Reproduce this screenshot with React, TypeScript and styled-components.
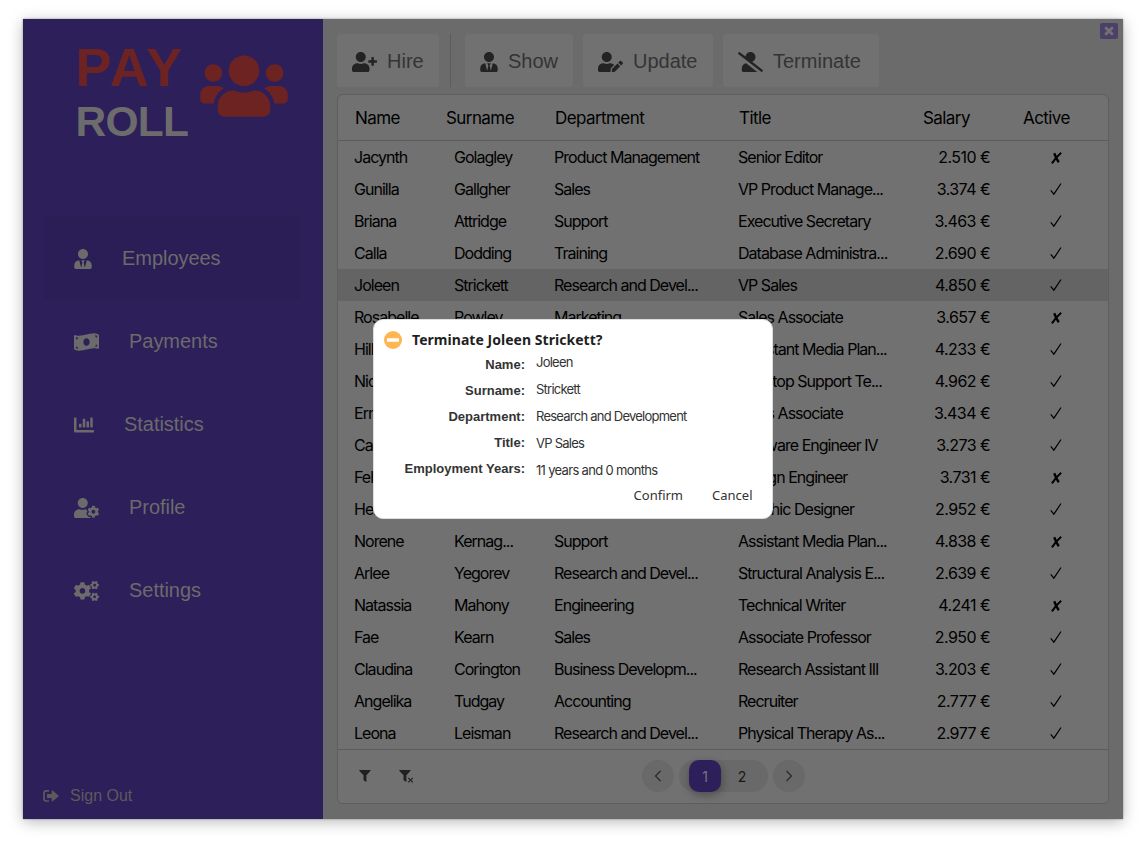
import React from "react";
import styled, { createGlobalStyle } from "styled-components";
import {
  FaUsers, FaUserTie, FaMoneyBillWave, FaChartBar, FaUserCog, FaCogs,
  FaUserPlus, FaUserEdit, FaUserSlash, FaTimes,
} from "react-icons/fa";

const sans = `"Liberation Sans", Arial, sans-serif`;
const inter = `Inter, "Liberation Sans", sans-serif`;

const Global = createGlobalStyle`
  *, *::before, *::after { box-sizing: border-box; }
  html, body { margin: 0; background: #fff; }
  svg { display: block; flex: none; }
`;

const Page = styled.div`
  width: 1146px;
  height: 846px;
  padding: 19px 23px;
  overflow: hidden;
`;

const Window = styled.div`
  position: relative;
  display: flex;
  width: 1100px;
  height: 800px;
  background: #6b6b6b;
  box-shadow: 0 0 2px rgba(0, 0, 0, 0.35), 0 3px 14px rgba(0, 0, 0, 0.27);
`;

const Sidebar = styled.aside`
  display: flex;
  flex-direction: column;
  width: 300px;
  padding: 21px 20px 10px;
  background: #2d1f5a;
  font-family: ${sans};
`;

const Brand = styled.div`
  display: flex;
  gap: 11px;
  height: 176px;
  padding-left: 33px;
`;

const BrandText = styled.div`
  width: 113px;
  font-weight: 700;
  white-space: nowrap;
`;

const BrandTop = styled.div`
  height: 54px;
  font-size: 54px;
  line-height: 54px;
  letter-spacing: 2.3px;
  margin-left: -0.5px;
  color: #6e2323;
`;

const BrandBottom = styled.div`
  padding-top: 4px;
  font-size: 42.5px;
  line-height: 48px;
  letter-spacing: -0.7px;
  margin-left: -0.5px;
  color: #6c6c6c;
`;

const BrandIcon = styled.div`
  padding-top: 10.5px;
  color: #6e2323;
  svg { width: 88px; height: 70px; }
`;

const NavItem = styled.a<{ $active?: boolean }>`
  display: flex;
  align-items: center;
  gap: 30px;
  width: 256px;
  height: 83px;
  margin-left: 1px;
  padding: 2px 0 0 30px;
  border-radius: 3px;
  font-size: 20px;
  letter-spacing: -0.04px;
  color: #6b6b6b;
  background: ${(p) => (p.$active ? "#2b1e56" : "transparent")};
`;

const SignOut = styled.a`
  display: flex;
  align-items: center;
  gap: 11px;
  height: 26px;
  margin-top: auto;
  font-size: 16px;
  color: #5b5b5d;
`;

const Main = styled.main`
  display: flex;
  flex-direction: column;
  gap: 7px;
  width: 800px;
  padding: 15px 14px;
`;

const Toolbar = styled.div`
  display: flex;
  gap: 10px;
  height: 53px;
`;

const ToolButton = styled.button<{ $width: number }>`
  display: flex;
  align-items: center;
  gap: 10px;
  width: ${(p) => p.$width}px;
  padding: 2px 0 0 15px;
  border: 0;
  border-radius: 3px;
  background: #717171;
  color: #343434;
  font: 20px ${sans};
  svg { color: #232323; }
`;

const Separator = styled.div`
  width: 1px;
  margin: 0 4px 0 1px;
  background: #5c5c5c;
`;

const Card = styled.section`
  width: 772px;
  height: 710px;
  border: 1px solid #5e5e5e;
  border-radius: 6px;
  background: #717171;
  color: #000;
  font-family: ${inter};
`;

const Header = styled.div`
  display: flex;
  align-items: center;
  height: 46px;
  padding-left: 17px;
  border-bottom: 1px solid #5c5c5c;
  font-size: 17px;
  letter-spacing: -0.58px;
`;

const HeadCell = styled.div<{ $width: number }>`
  width: ${(p) => p.$width}px;
`;

const Row = styled.div<{ $selected?: boolean }>`
  display: grid;
  grid-template-columns: 100px 100px 184px 152px 100px 1fr;
  align-items: center;
  height: 32px;
  padding-left: 16px;
  background: ${(p) => (p.$selected ? "#646464" : "transparent")};
  font-size: 16px;
  letter-spacing: -0.97px;
  white-space: nowrap;
`;

const Salary = styled.div`
  text-align: right;
  letter-spacing: -0.56px;
`;

const Active = styled.div`
  display: flex;
  padding-left: 60px;
`;

const Footer = styled.div`
  display: flex;
  align-items: center;
  height: 53px;
  padding-left: 21px;
  border-top: 1px solid #5c5c5c;
`;

const Filters = styled.div`
  display: flex;
  gap: 28px;
  width: 283px;
  color: #212121;
`;

const Pager = styled.div`
  display: flex;
  gap: 5px;
  font-size: 14px;
`;

const Round = styled.button`
  display: grid;
  place-items: center;
  width: 32px;
  height: 32px;
  padding: 0;
  border: 0;
  border-radius: 50%;
  background: #696969;
`;

const Pages = styled.div`
  display: flex;
  width: 89px;
  height: 32px;
  padding-left: 10px;
  border-radius: 16px;
  background: #696969;
`;

const PageNumber = styled.div<{ $current?: boolean }>`
  display: grid;
  place-items: center;
  width: ${(p) => (p.$current ? 32 : 42)}px;
  height: 32px;
  border-radius: 10px;
  background: ${(p) => (p.$current ? "#2d1f5a" : "transparent")};
  color: ${(p) => (p.$current ? "#777480" : "#171717")};
  box-shadow: ${(p) => (p.$current ? "1px 3px 8px rgba(0,0,0,.3)" : "none")};
`;

const Close = styled.button`
  position: absolute;
  top: 4px;
  right: 5px;
  display: grid;
  place-items: center;
  width: 18px;
  height: 16px;
  padding: 0;
  border: 0;
  border-radius: 2px;
  background: #4c4068;
  color: #737373;
  svg { stroke: currentColor; stroke-width: 30px; }
`;

const Dialog = styled.div`
  position: absolute;
  left: 350px;
  top: 300px;
  width: 400px;
  height: 200px;
  padding: 11px 11px 0;
  border: 1px solid #ddd;
  border-radius: 10px;
  background: #fff;
  color: #333;
`;

const DialogTitle = styled.div`
  display: flex;
  align-items: center;
  gap: 10px;
  height: 18px;
  margin: 0 0 1px -1px;
  color: #1f1f1f;
  font: 700 14px/18px "Noto Sans", sans-serif;
  letter-spacing: 0.04px;
  span { margin-top: -1px; }
`;

const Details = styled.div`
  display: flex;
  gap: 11px;
  height: 136px;
`;

const Labels = styled.div`
  display: flex;
  flex-direction: column;
  width: 140px;
  padding-top: 2px;
  text-align: right;
  font: 700 13px/26px ${sans};
`;

const Values = styled.div`
  display: flex;
  flex-direction: column;
  margin-top: -1px;
  font: 13px/27px ${inter};
  letter-spacing: -0.76px;
`;

const Years = styled.span`
  letter-spacing: -0.68px;
`;

const Actions = styled.div`
  display: flex;
  justify-content: flex-end;
  gap: 29px;
  padding-right: 8.5px;
  font: 13px/18px "Noto Sans", sans-serif;
`;

const Glyph = styled.span<{ $width: number }>`
  display: block;
  flex: none;
  width: ${(p) => p.$width}px;
  svg { width: 100%; height: 20px; }
`;

const Check = () => (
  <svg width="12" height="14" viewBox="0 0 12 14" fill="none" stroke="#000" strokeWidth="1.2">
    <path d="M.7 8.3 3.9 12.2 11 1.5" />
  </svg>
);

const Cross = () => (
  <svg width="12" height="14" viewBox="0 0 12 14" fill="none" stroke="#000">
    <path d="M4.2 3.2C5 5.4 6.4 9.4 8.8 12.2" strokeWidth="2.5" />
    <path d="M11.2 2.8C7.8 5.6 4.8 9.2 1.9 13.4" strokeWidth="1.9" />
  </svg>
);

const SignOutIcon = () => (
  <svg width="16" height="14" viewBox="0 0 16 14">
    <path d="M6 1.9H3.2Q1 1.9 1 4v5.8q0 2.2 2.2 2.2H6" fill="none" stroke="currentColor" strokeWidth="1.7" />
    <path d="M4.5 5.1h4.2V1.6q0-.8.6-.3l6.1 5.2q.6.5 0 1l-6.1 5.1q-.6.5-.6-.3V9H4.5q-.5 0-.5-.5V5.6q0-.5.5-.5Z" fill="currentColor" />
  </svg>
);

const Chevron = ({ right }: { right?: boolean }) => (
  <svg width="8" height="12" viewBox="0 0 8 12" fill="none" stroke="#2a2a2a" strokeWidth="1.2">
    <path d={right ? "M1.5 1 6.5 6 1.5 11" : "M6.5 1 1.5 6 6.5 11"} />
  </svg>
);

const Funnel = ({ clear }: { clear?: boolean }) => (
  <svg width={clear ? 15 : 12} height="14" viewBox={clear ? "0 0 15 14" : "0 0 12 14"} fill="currentColor">
    <path d="M.6 1h10.6q.7.2.3.7L7.4 6.2v6.2l-.7.4L4.5 11V6.2L.3 1.7Q0 1.2.6 1Z" />
    {clear && <path d="m9.3 8.8 4.5 4.5m0-4.5-4.5 4.5" stroke="currentColor" strokeWidth="1.2" fill="none" />}
  </svg>
);

const nav = [
  { label: "Employees", icon: <FaUserTie />, width: 18 },
  { label: "Payments", icon: <FaMoneyBillWave />, width: 25 },
  { label: "Statistics", icon: <FaChartBar />, width: 20 },
  { label: "Profile", icon: <FaUserCog />, width: 25 },
  { label: "Settings", icon: <FaCogs />, width: 25 },
];

const tools = [
  { label: "Show", icon: <FaUserTie />, glyph: 18, width: 108 },
  { label: "Update", icon: <FaUserEdit />, glyph: 25, width: 130 },
  { label: "Terminate", icon: <FaUserSlash />, glyph: 25, width: 156 },
];

const employees: [string, string, string, string, string, boolean][] = [
  ["Jacynth", "Golagley", "Product Management", "Senior Editor", "2.510", false],
  ["Gunilla", "Gallgher", "Sales", "VP Product Manage...", "3.374", true],
  ["Briana", "Attridge", "Support", "Executive Secretary", "3.463", true],
  ["Calla", "Dodding", "Training", "Database Administra...", "2.690", true],
  ["Joleen", "Strickett", "Research and Devel...", "VP Sales", "4.850", true],
  ["Rosabelle", "Powley", "Marketing", "Sales Associate", "3.657", false],
  ["Hilly", "", "", "Assistant Media Plan...", "4.233", true],
  ["Nicol", "", "", "Desktop Support Te...", "4.962", true],
  ["Erny", "", "", "Sales Associate", "3.434", true],
  ["Cally", "", "", "Software Engineer IV", "3.273", true],
  ["Felic", "", "", "Design Engineer", "3.731", false],
  ["Helen", "", "", "Graphic Designer", "2.952", true],
  ["Norene", "Kernag...", "Support", "Assistant Media Plan...", "4.838", false],
  ["Arlee", "Yegorev", "Research and Devel...", "Structural Analysis E...", "2.639", true],
  ["Natassia", "Mahony", "Engineering", "Technical Writer", "4.241", false],
  ["Fae", "Kearn", "Sales", "Associate Professor", "2.950", true],
  ["Claudina", "Corington", "Business Developm...", "Research Assistant III", "3.203", true],
  ["Angelika", "Tudgay", "Accounting", "Recruiter", "2.777", true],
  ["Leona", "Leisman", "Research and Devel...", "Physical Therapy As...", "2.977", true],
];

export default function App() {
  return (
    <Page>
      <Global />
      <Window>
        <Sidebar>
          <Brand>
            <BrandText>
              <BrandTop>PAY</BrandTop>
              <BrandBottom>ROLL</BrandBottom>
            </BrandText>
            <BrandIcon>
              <FaUsers />
            </BrandIcon>
          </Brand>
          <nav>
            {nav.map((n, i) => (
              <NavItem key={n.label} $active={i === 0}>
                <Glyph $width={n.width}>{n.icon}</Glyph>
                {n.label}
              </NavItem>
            ))}
          </nav>
          <SignOut>
            <SignOutIcon />
            Sign Out
          </SignOut>
        </Sidebar>
        <Main>
          <Toolbar>
            <ToolButton $width={102}>
              <Glyph $width={25}><FaUserPlus /></Glyph>
              Hire
            </ToolButton>
            <Separator />
            {tools.map((t) => (
              <ToolButton key={t.label} $width={t.width}>
                <Glyph $width={t.glyph}>{t.icon}</Glyph>
                {t.label}
              </ToolButton>
            ))}
          </Toolbar>
          <Card>
            <Header>
              <HeadCell $width={91}>Name</HeadCell>
              <HeadCell $width={109}>Surname</HeadCell>
              <HeadCell $width={184}>Department</HeadCell>
              <HeadCell $width={184}>Title</HeadCell>
              <HeadCell $width={100}>Salary</HeadCell>
              <HeadCell $width={60}>Active</HeadCell>
            </Header>
            {employees.map(([name, surname, department, title, salary, active]) => (
              <Row key={name} $selected={name === "Joleen"}>
                <div>{name}</div>
                <div>{surname}</div>
                <div>{department}</div>
                <div>{title}</div>
                <Salary>{salary} €</Salary>
                <Active>{active ? <Check /> : <Cross />}</Active>
              </Row>
            ))}
            <Footer>
              <Filters>
                <Funnel />
                <Funnel clear />
              </Filters>
              <Pager>
                <Round><Chevron /></Round>
                <Pages>
                  <PageNumber $current>1</PageNumber>
                  <PageNumber>2</PageNumber>
                </Pages>
                <Round><Chevron right /></Round>
              </Pager>
            </Footer>
          </Card>
        </Main>
        <Close><FaTimes size={12} /></Close>
        <Dialog>
          <DialogTitle>
            <svg width="18" height="18" viewBox="0 0 18 18">
              <circle cx="9" cy="9" r="9" fill="#ffb652" />
              <rect x="3" y="7.2" width="12" height="3.6" rx=".6" fill="#fff" />
            </svg>
            <span>Terminate Joleen Strickett?</span>
          </DialogTitle>
          <Details>
            <Labels>
              <span>Name:</span>
              <span>Surname:</span>
              <span>Department:</span>
              <span>Title:</span>
              <span>Employment Years:</span>
            </Labels>
            <Values>
              <span>Joleen</span>
              <span>Strickett</span>
              <span>Research and Development</span>
              <span>VP Sales</span>
              <Years>11 years and 0 months</Years>
            </Values>
          </Details>
          <Actions>
            <span>Confirm</span>
            <span>Cancel</span>
          </Actions>
        </Dialog>
      </Window>
    </Page>
  );
}
